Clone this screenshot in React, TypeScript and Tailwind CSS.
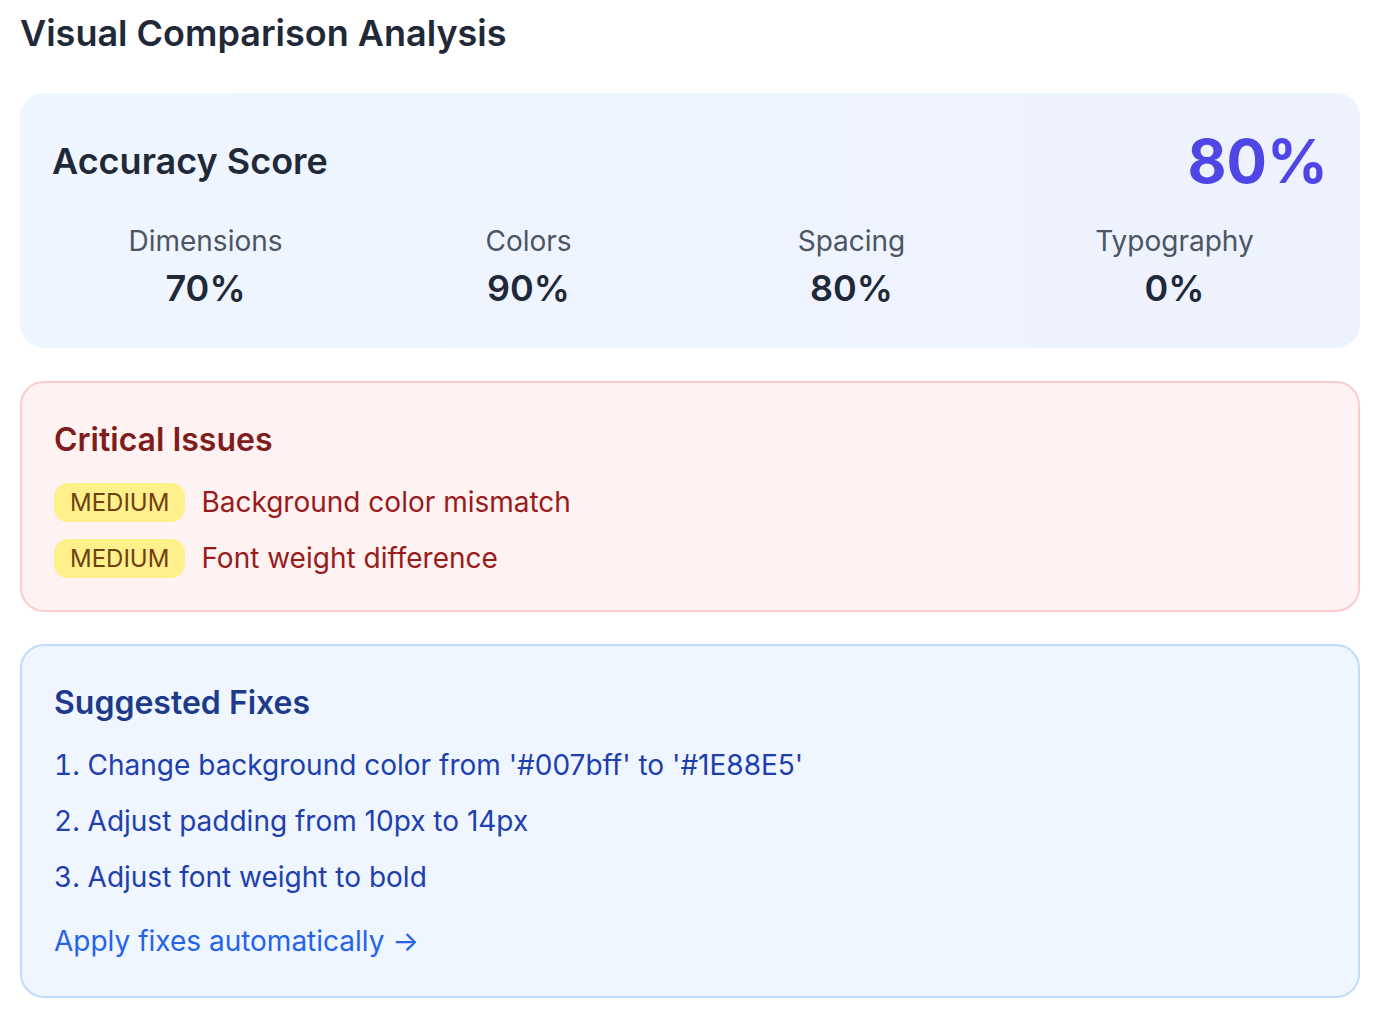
const SCORES = [
  { label: 'Dimensions', value: 70 },
  { label: 'Colors', value: 90 },
  { label: 'Spacing', value: 80 },
  { label: 'Typography', value: 0 },
]

const ISSUES = [
  { severity: 'MEDIUM', text: 'Background color mismatch' },
  { severity: 'MEDIUM', text: 'Font weight difference' },
]

const FIXES = [
  "Change background color from '#007bff' to '#1E88E5'",
  'Adjust padding from 10px to 14px',
  'Adjust font weight to bold',
]

export default function App() {
  return (
    <div
      className="min-h-screen bg-white px-[20px] pt-[19px] pb-[24px]"
      style={{ fontFamily: 'Inter, "Noto Sans", sans-serif' }}
    >
      <h2 className="text-[36px] leading-[28px] font-semibold text-[#1f2937] mb-[46px]">
        Visual Comparison Analysis
      </h2>

      <div className="rounded-[24px] bg-linear-to-r from-[#eff6ff] to-[#eef2ff] p-[32px]">
        <div className="flex items-center justify-between h-[72px]">
          <h3 className="text-[36px] leading-[56px] font-semibold text-[#1f2937]">Accuracy Score</h3>
          <div className="text-[60px] leading-[72px] font-bold text-[#4f46e5]">80%</div>
        </div>
        <div className="grid grid-cols-4 gap-[16px] mt-[24px]">
          {SCORES.map((s) => (
            <div key={s.label} className="text-center">
              <div className="text-[28px] leading-[40px] text-[#4b5563]">{s.label}</div>
              <div className="text-[36px] leading-[55px] font-semibold text-[#1f2937]">{s.value}%</div>
            </div>
          ))}
        </div>
      </div>

      <div className="mt-[33px] rounded-[24px] border-2 border-[#fecaca] bg-[#fef2f2] px-[32px] pt-[33px] pb-[32px]">
        <h3 className="text-[32px] leading-[48px] font-semibold text-[#7f1d1d] mb-[18px]">Critical Issues</h3>
        <div className="flex flex-col gap-[16px]">
          {ISSUES.map((issue, idx) => (
            <div key={idx} className="flex items-center gap-[16px]">
              <span className="rounded-[14px] bg-[#fef08a] px-[16px] text-[24px] leading-[39px] text-[#713f12]">
                {issue.severity}
              </span>
              <span className="text-[28px] leading-[40px] text-[#991b1b]">{issue.text}</span>
            </div>
          ))}
        </div>
      </div>

      <div className="mt-[32px] rounded-[24px] border-2 border-[#bfdbfe] bg-[#eff6ff] px-[32px] pt-[33px] pb-[35px]">
        <h3 className="text-[32px] leading-[48px] font-semibold text-[#1e3a8a] mb-[18px]">Suggested Fixes</h3>
        <ol className="flex flex-col gap-[16px]">
          {FIXES.map((fix, idx) => (
            <li key={idx} className="text-[28px] leading-[40px] text-[#1e40af]">
              <span className="tabular-nums">{idx + 1}.</span> {fix}
            </li>
          ))}
        </ol>
        <div className="mt-[24px]">
          <a href="#" className="text-[28px] leading-[40px] text-[#2563eb]">
            Apply fixes automatically →
          </a>
        </div>
      </div>
    </div>
  )
}
